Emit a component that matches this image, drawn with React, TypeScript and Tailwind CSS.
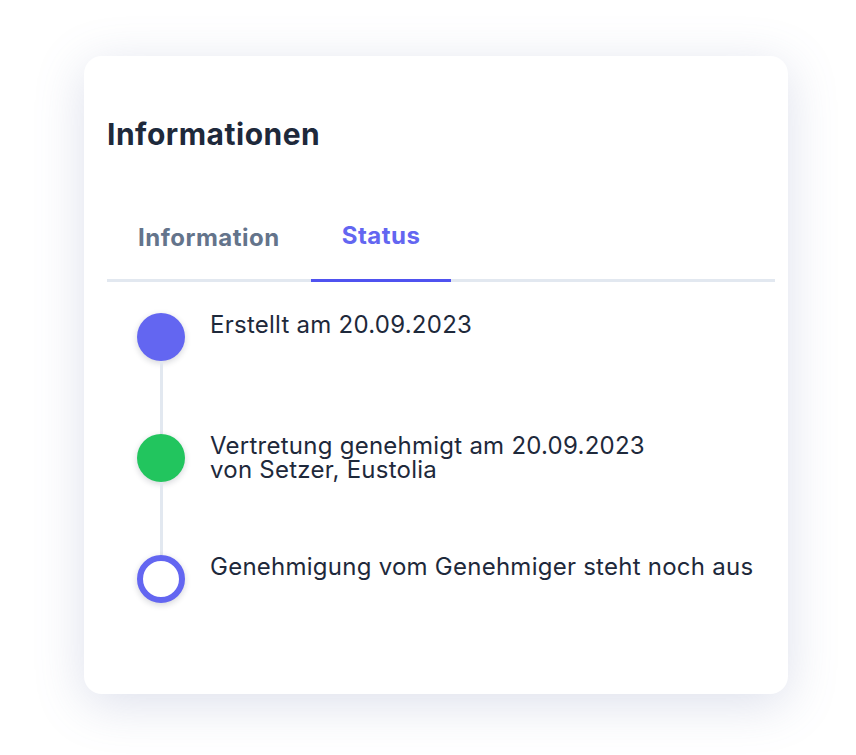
import React from "react";

type Step = {
  kind: "done" | "approved" | "pending";
  lines: string[];
};

const STEPS: Step[] = [
  { kind: "done", lines: ["Erstellt am 20.09.2023"] },
  { kind: "approved", lines: ["Vertretung genehmigt am 20.09.2023", "von Setzer, Eustolia"] },
  { kind: "pending", lines: ["Genehmigung vom Genehmiger steht noch aus"] },
];

function Dot({ kind }: { kind: Step["kind"] }) {
  if (kind === "pending") {
    return (
      <span className="block h-[48px] w-[48px] shrink-0 rounded-full border-[6px] border-[#6366f1] bg-white shadow-[0_2px_6px_rgba(15,23,42,0.18)]" />
    );
  }
  return (
    <span
      className={
        kind === "done"
          ? "block h-[48px] w-[48px] shrink-0 rounded-full bg-[#6366f1] shadow-[0_2px_6px_rgba(15,23,42,0.18)]"
          : "block h-[48px] w-[48px] shrink-0 rounded-full bg-[#22c55e] shadow-[0_2px_6px_rgba(15,23,42,0.18)]"
      }
    />
  );
}

function Timeline() {
  return (
    <div className="mt-[31px] flex flex-col pl-[30px]">
      {STEPS.map((s, i) => {
        const last = i === STEPS.length - 1;
        return (
          <div key={i} className={last ? "flex" : "flex h-[121px]"}>
            <div className="flex w-[48px] flex-col items-center">
              <Dot kind={s.kind} />
              {!last ? <span className="w-[3px] flex-1 bg-[#e2e8f0]" /> : null}
            </div>
            <div className="ml-[25px] text-[24px] leading-[24px] tracking-[0.25px] text-[#1e293b]">
              {s.lines.map((l) => (
                <div key={l}>{l}</div>
              ))}
            </div>
          </div>
        );
      })}
    </div>
  );
}

export default function App() {
  return (
    <div
      className="min-h-screen bg-white pl-[84px] pt-[56px]"
      style={{ fontFamily: "Inter, 'Noto Sans', sans-serif" }}
    >
      <div className="h-[638px] w-[704px] rounded-[18px] bg-white pl-[23px] pr-[13px] pt-[60px] shadow-[0_10px_50px_rgba(100,116,170,0.22)]">
        <h2 className="text-[30px] font-bold leading-[36px] tracking-[0.5px] text-[#1e293b]">
          Informationen
        </h2>

        <div className="mt-[69px] flex border-b-[3px] border-[#e2e8f0]">
          <button className="-mb-[3px] px-[31px] pb-[28px] text-[24px] font-bold leading-[30px] tracking-[0.5px] text-[#64748b]">
            Information
          </button>
          <button className="-mb-[3px] border-b-[3px] border-[#4f52f0] px-[31px] pb-[28px] text-[24px] font-bold leading-[30px] tracking-[0.5px] text-[#6366f1]">
            Status
          </button>
        </div>

        <Timeline />
      </div>
    </div>
  );
}
